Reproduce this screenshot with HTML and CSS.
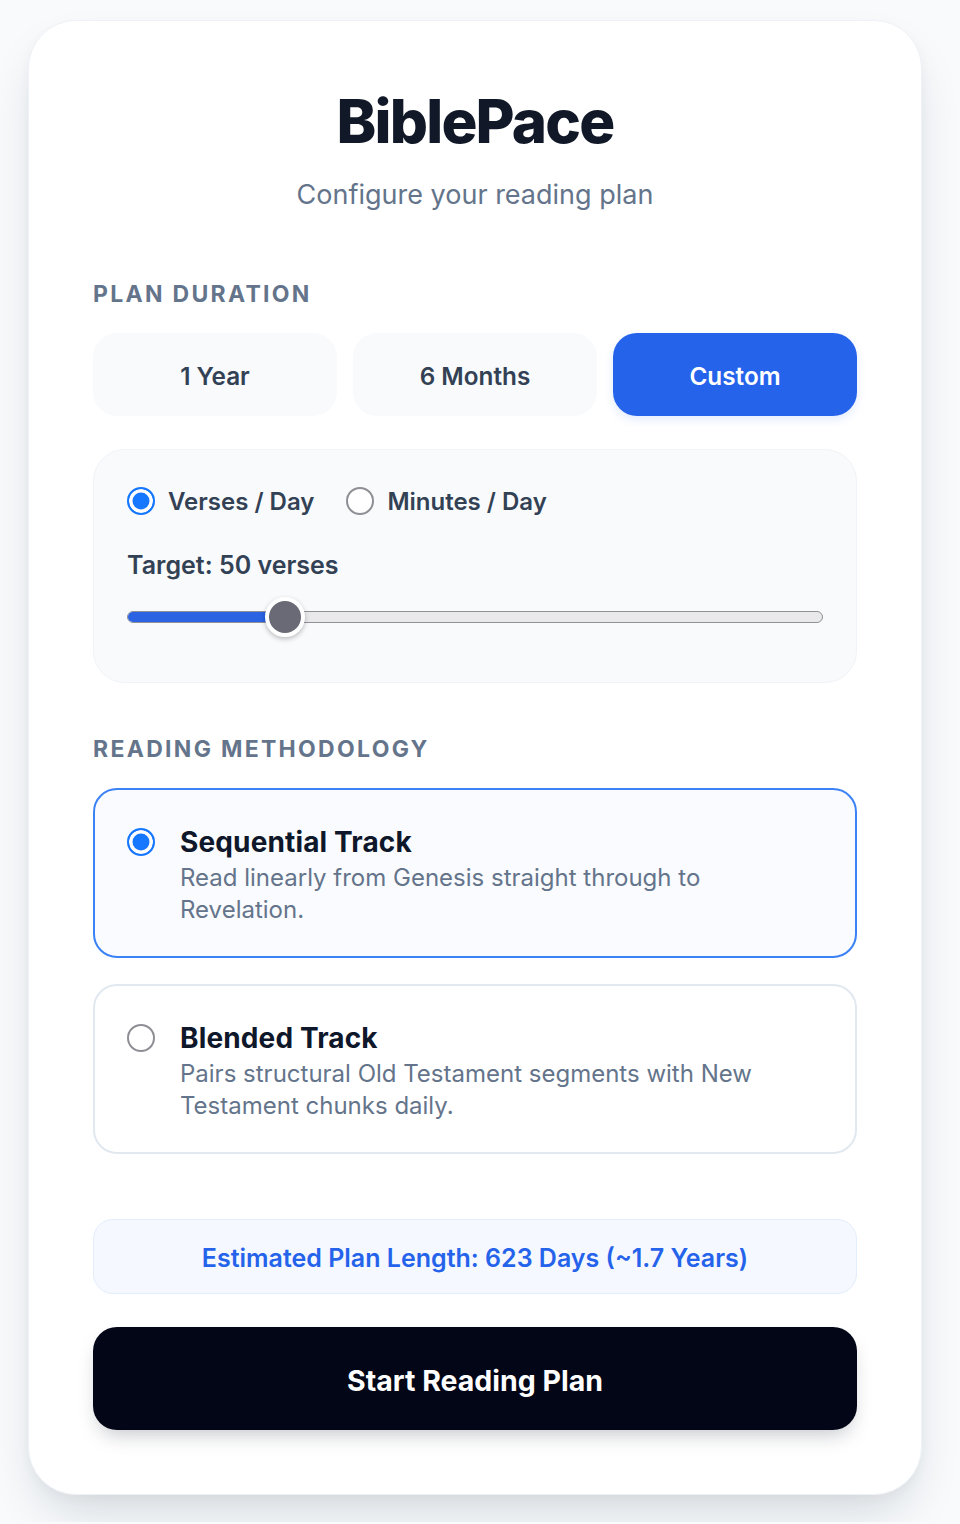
FILE: index.html
```html
<!DOCTYPE html>
<html lang="en">
<head>
<meta charset="utf-8">
<title>BiblePace</title>
<link rel="stylesheet" href="styles.css">
</head>
<body>
<main class="card">
  <header class="header">
    <h1 class="title">BiblePace</h1>
    <p class="subtitle">Configure your reading plan</p>
  </header>

  <section class="section">
    <h2 class="label">Plan Duration</h2>
    <div class="durations">
      <button class="dur">1 Year</button>
      <button class="dur">6 Months</button>
      <button class="dur dur-active">Custom</button>
    </div>

    <div class="custom">
      <div class="modes">
        <label class="mode"><span class="radio radio-on"></span><span>Verses / Day</span></label>
        <label class="mode"><span class="radio"></span><span>Minutes / Day</span></label>
      </div>
      <div class="target">Target: 50 verses</div>
      <div class="slider">
        <div class="track">
          <div class="fill" style="width: 158px"></div>
        </div>
        <div class="thumb" style="left: 138px"></div>
      </div>
    </div>
  </section>

  <section class="section section-method">
    <h2 class="label">Reading Methodology</h2>
    <div class="options">
      <div class="option option-active">
        <span class="radio radio-on"></span>
        <div class="option-body">
          <div class="option-title">Sequential Track</div>
          <div class="option-desc">Read linearly from Genesis straight through to Revelation.</div>
        </div>
      </div>
      <div class="option">
        <span class="radio"></span>
        <div class="option-body">
          <div class="option-title">Blended Track</div>
          <div class="option-desc">Pairs structural Old Testament segments with New Testament chunks daily.</div>
        </div>
      </div>
    </div>
  </section>

  <div class="estimate">Estimated Plan Length: 623 Days (~1.7 Years)</div>
  <button class="start">Start Reading Plan</button>
</main>
</body>
</html>
```

FILE: styles.css
```css
* { box-sizing: border-box; }

html { background: #f8fafc; }

body {
  margin: 0;
  background: #f8fafc;
  font-family: "Inter", "Noto Sans", "Liberation Sans", sans-serif;
  color: #0f172a;
  padding: 20px 38px 27px 28px;
}

.card {
  background: #ffffff;
  border: 1px solid #eef2f7;
  border-radius: 48px;
  padding: 64px 64px 64px;
  box-shadow: 0 25px 50px -12px rgba(15, 23, 42, 0.16), 0 4px 12px rgba(15, 23, 42, 0.03);
}

.header { text-align: center; margin-bottom: 63px; }

.title {
  margin: 0;
  font-size: 60px;
  line-height: 72px;
  font-weight: 800;
  letter-spacing: -0.03em;
  color: #111827;
}

.subtitle {
  margin: 18px 0 0;
  font-size: 27px;
  line-height: 40px;
  color: #64748b;
  font-weight: 400;
}

.label {
  margin: 0 0 23px;
  font-size: 23px;
  line-height: 32px;
  font-weight: 700;
  letter-spacing: 0.1em;
  text-transform: uppercase;
  color: #64748b;
}

.durations {
  display: grid;
  grid-template-columns: repeat(3, 1fr);
  gap: 16px;
}

.dur {
  font-family: inherit;
  font-size: 24.3px;
  line-height: 41px;
  font-weight: 600;
  padding: 23px 0 19px;
  border: 0;
  border-radius: 24px;
  background: #f8fafc;
  color: #334155;
}

.dur-active {
  background: #2563eb;
  color: #ffffff;
  box-shadow: 0 4px 10px rgba(37, 99, 235, 0.12);
}

.custom {
  margin-top: 33px;
  background: #f8fafc;
  border: 1px solid #f0f3f7;
  border-radius: 32px;
  padding: 33px 33px 45px;
}

.modes {
  display: flex;
  gap: 32px;
  height: 36px;
  align-items: center;
}

.mode {
  display: flex;
  align-items: center;
  gap: 13px;
  font-size: 24px;
  font-weight: 600;
  color: #334155;
}

.radio {
  flex: none;
  width: 28px;
  height: 28px;
  border-radius: 50%;
  border: 2px solid #8e8e95;
  background: #ffffff;
}

.radio-on {
  border: 2.5px solid #1677ff;
  background: #1677ff;
  box-shadow: inset 0 0 0 3.5px #ffffff;
}

.target {
  margin-top: 28px;
  font-size: 25px;
  line-height: 36px;
  font-weight: 600;
  color: #334155;
}

.slider {
  position: relative;
  margin-top: 14px;
  height: 40px;
  display: flex;
  align-items: center;
}

.track {
  width: 100%;
  height: 12px;
  border-radius: 6px;
  background: #e9e9ec;
  border: 1.5px solid #909097;
  overflow: hidden;
}

.fill {
  height: 100%;
  background: #2b63e3;
}

.thumb {
  position: absolute;
  top: 0;
  width: 40px;
  height: 40px;
  border-radius: 50%;
  background: #6a6a76;
  border: 4px solid #ffffff;
  box-shadow: 0 2px 5px rgba(0, 0, 0, 0.25);
}

.section-method { margin-top: 50px; }

.options {
  display: flex;
  flex-direction: column;
  gap: 26px;
}

.option {
  display: flex;
  gap: 25px;
  align-items: flex-start;
  padding: 32px 32px 30px;
  border: 2px solid #e2e8f0;
  border-radius: 24px;
  background: #ffffff;
}

.option .radio { margin-top: 6px; }

.option-active {
  border-color: #3b82f6;
  background: #f9fbfe;
}

.option-title {
  font-size: 28px;
  line-height: 40px;
  font-weight: 700;
  color: #0f172a;
  letter-spacing: 0.005em;
}

.option-desc {
  font-size: 24px;
  line-height: 32px;
  color: #64748b;
}

.estimate {
  margin-top: 65px;
  padding: 21px 0 17px;
  text-align: center;
  background: #f5f9ff;
  border: 1px solid #e3edfc;
  border-radius: 20px;
  font-size: 25px;
  line-height: 35px;
  font-weight: 600;
  color: #2563eb;
}

.start {
  display: block;
  width: 100%;
  margin-top: 33px;
  padding: 33px 0 29px;
  border: 0;
  border-radius: 24px;
  background: #030617;
  color: #ffffff;
  font-family: inherit;
  font-size: 28.5px;
  line-height: 41px;
  font-weight: 700;
  box-shadow: 0 10px 20px -6px rgba(15, 23, 42, 0.25);
}
```
